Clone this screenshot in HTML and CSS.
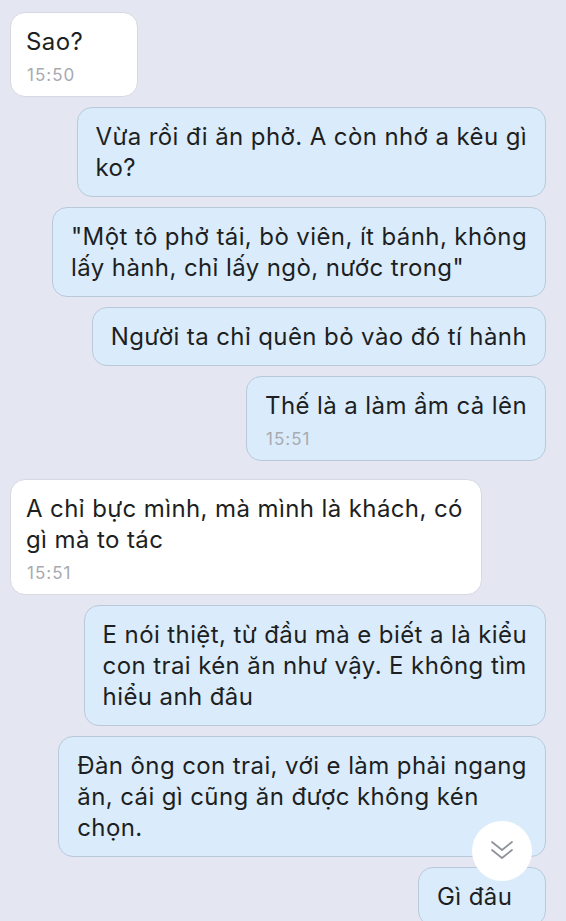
FILE: index.html
```html
<!DOCTYPE html>
<html lang="vi">
  <head>
    <meta charset="UTF-8" />
    <meta name="viewport" content="width=device-width, initial-scale=1.0" />
    <title>Chat</title>
    <link rel="stylesheet" href="styles.css">
  </head>
  <body>
    <div class="chat">
      <!-- received -->
      <div class="bubble in">
        <div class="text">Sao?</div>
        <div class="time">15:50</div>
      </div>

      <!-- sent -->
      <div class="bubble out first">
        <div class="text">Vừa rồi đi ăn phở. A còn nhớ a kêu gì<br>ko?</div>
      </div>
      <div class="bubble out">
        <div class="text">"Một tô phở tái, bò viên, ít bánh, không<br>lấy hành, chỉ lấy ngò, nước trong"</div>
      </div>
      <div class="bubble out">
        <div class="text">Người ta chỉ quên bỏ vào đó tí hành</div>
      </div>
      <div class="bubble out">
        <div class="text">Thế là a làm ầm cả lên</div>
        <div class="time">15:51</div>
      </div>

      <div class="bubble in first">
        <div class="text">A chỉ bực mình, mà mình là khách, có<br>gì mà to tác</div>
        <div class="time">15:51</div>
      </div>

      <div class="bubble out first">
        <div class="text">E nói thiệt, từ đầu mà e biết a là kiểu<br>con trai kén ăn như vậy. E không tìm<br>hiểu anh đâu</div>
      </div>
      <div class="bubble out">
        <div class="text">Đàn ông con trai, với e làm phải ngang<br>ăn, cái gì cũng ăn được không kén<br>chọn.</div>
      </div>
      <div class="bubble out">
        <div class="text">Gì đâu</div>
      </div>
    </div>

    <!-- scroll to bottom -->
    <button class="scroll-down" aria-label="Scroll down">
      <svg width="24" height="24" viewBox="0 0 24 24" fill="none" stroke="#8d919a" stroke-width="1.7" stroke-linecap="round" stroke-linejoin="round">
        <path d="M2 3 L12 11 L22 3" />
        <path d="M2 11 L12 19 L22 11" />
      </svg>
    </button>
  </body>
</html>
```

FILE: styles.css
```css
/* ============ Base ============ */
:root {
  --bg: #e4e6f1;
  --in-bg: #ffffff;
  --in-border: #d6d9e2;
  --out-bg: #daecfb;
  --out-border: #b9c9da;
  --text: #1d1f23;
  --time: #a7aab0;
}

html,
body {
  height: 100%;
  margin: 0;
  overflow: hidden;
  background: var(--bg);
  font-family: Inter, "Liberation Sans", Arial, sans-serif;
  -webkit-font-smoothing: antialiased;
}

/* ============ Message list ============ */
.chat {
  display: flex;
  flex-direction: column;
  gap: 10px;
  padding: 12px 20px 0 10px;
}

.bubble {
  box-sizing: border-box;
  min-width: 128px;
  padding: 13px 18px 13px 15px;
  border-radius: 15px;
  border: 1px solid transparent;
}

.bubble:has(.time) {
  padding-bottom: 11px;
}

.bubble.in {
  align-self: flex-start;
  background: var(--in-bg);
  border-color: var(--in-border);
}
.bubble.in.first {
  margin-top: 8px;
}

.bubble.out {
  align-self: flex-end;
  background: var(--out-bg);
  border-color: var(--out-border);
  padding-left: 18px;
}

.text {
  font-size: 24px;
  line-height: 31px;
  letter-spacing: 0.4px;
  color: var(--text);
  white-space: nowrap;
}

.time {
  margin-top: 8px;
  padding-left: 1px;
  font-size: 17px;
  line-height: 20px;
  letter-spacing: 1px;
  color: var(--time);
}

/* ============ Scroll-down button ============ */
.scroll-down {
  position: absolute;
  left: 472px;
  top: 821px;
  width: 60px;
  height: 60px;
  border: none;
  border-radius: 50%;
  background: #ffffff;
  display: flex;
  align-items: center;
  justify-content: center;
  padding: 0;
}
```
